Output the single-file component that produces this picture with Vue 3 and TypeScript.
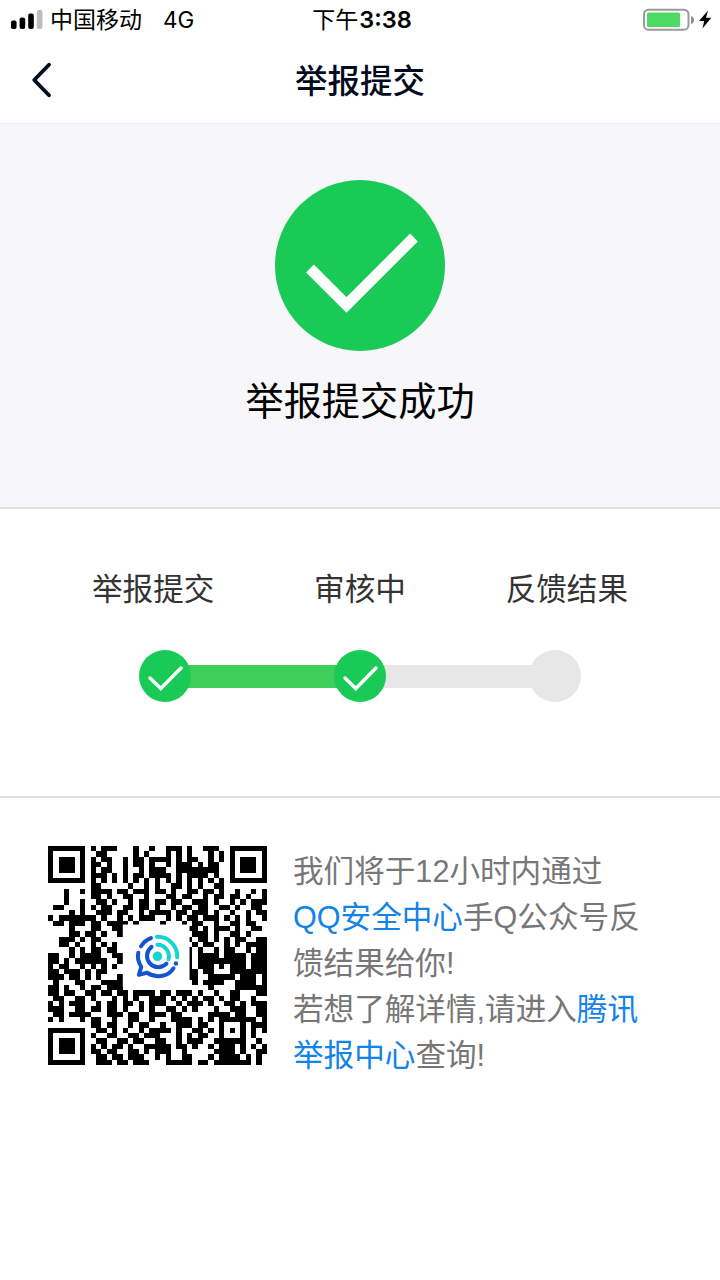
<template>
  <div class="page">
    <div class="status-bar">
      <div class="status-left">
        <svg class="signal" width="32" height="20" viewBox="0 0 32 20">
          <rect x="0" y="10.5" width="5.6" height="8.5" rx="2" fill="#000" />
          <rect x="8.6" y="7.5" width="5.6" height="11.5" rx="2" fill="#000" />
          <rect x="17.2" y="3.6" width="5.6" height="15.4" rx="2" fill="#000" />
          <rect x="25.8" y="0" width="5.6" height="19" rx="2" fill="#bdbdbd" />
        </svg>
        <span class="carrier">中国移动</span>
        <span class="network">4G</span>
      </div>
      <div class="clock">下午<b>3:38</b></div>
      <div class="status-right">
        <svg width="69" height="24" viewBox="0 0 69 24">
          <rect x="1" y="1.7" width="44.5" height="20" rx="4.5" fill="#fff" stroke="#999" stroke-width="2" />
          <rect x="4" y="4.5" width="33" height="14.5" rx="1.5" fill="#4cd964" />
          <path d="M48 8 Q51 9 51 12 Q51 15 48 16 Z" fill="#8c8c8c" />
          <path d="M65 2.5 L56 13 H61.2 L59.5 20.5 L68.3 9.8 H63 Z" fill="#000" />
        </svg>
      </div>
    </div>

    <header class="nav-bar">
      <svg class="back" width="22" height="38" viewBox="0 0 22 38">
        <path d="M19 3.7 L4.2 19 L19 34.3" fill="none" stroke="#030b21" stroke-width="3.8" stroke-linecap="round" stroke-linejoin="round" />
      </svg>
      <h1>举报提交</h1>
    </header>

    <section class="result">
      <svg width="170" height="171" viewBox="0 0 170 171">
        <ellipse cx="85" cy="85.5" rx="85" ry="85.5" fill="#19cb56" />
        <path d="M35 88.5 L71.5 125 L139 57.5" fill="none" stroke="#fff" stroke-width="11" />
      </svg>
      <p>举报提交成功</p>
    </section>

    <section class="progress">
      <div class="labels">
        <span v-for="step in steps" :key="step.label">{{ step.label }}</span>
      </div>
      <div class="track">
        <template v-for="(step, index) in steps" :key="step.label">
          <div v-if="index > 0" :class="['line', { done: step.done }]"></div>
          <div :class="['dot', { done: step.done }]">
            <svg v-if="step.done" width="52" height="52" viewBox="0 0 52 52">
              <path d="M11 28 L21.8 38.5 L42 18" fill="none" stroke="#fff" stroke-width="3.4" stroke-linecap="round" />
            </svg>
          </div>
        </template>
      </div>
    </section>

    <section class="notice">
      <svg class="qr" width="219" height="219" viewBox="0 0 41 41">
        <path :d="qrPath" fill="#000" shape-rendering="crispEdges" />
        <rect x="14" y="14.7" width="12.5" height="11.7" fill="#fff" />
        <g transform="translate(20.5 20.65) scale(0.18722)" fill="none" stroke-width="4" stroke-linecap="round">
          <path d="M-0.5 -19.5 A19.5 19.5 0 0 1 19.7 1" stroke="#16d5d0" />
          <path d="M0 -11.5 A11.5 11.5 0 0 1 11 3" stroke="#16d5d0" />
          <path d="M-16.5 -10 A19.3 19.3 0 0 1 -6.5 -18.2" stroke="#1454d2" />
          <path d="M-19.2 -3.5 C-20.5 2 -18.5 7 -16.2 10.5 L-18.7 18.6 L-10.5 16.5 C0 23 11.5 19.5 16 12" stroke="#1454d2" stroke-linejoin="round" />
          <path d="M-6 -9.5 A11.3 11.3 0 1 0 9 7.3" stroke="#1454d2" />
          <circle cx="0" cy="0" r="4.8" fill="#16d5d0" />
          <circle cx="18.4" cy="7.2" r="2.2" fill="#1454d2" />
        </g>
      </svg>
      <div class="notice-text">
        我们将于12小时内通过<br />
        <a>QQ安全中心</a>手Q公众号反<br />
        馈结果给你!<br />
        若想了解详情,请进入<a>腾讯<br />举报中心</a>查询!
      </div>
    </section>
  </div>
</template>

<script setup lang="ts">
import { computed } from 'vue'

interface Step {
  label: string
  done: boolean
}

const steps: Step[] = [
  { label: '举报提交', done: true },
  { label: '审核中', done: true },
  { label: '反馈结果', done: false }
]

// # - чёрный модуль
const qrRows: string[] = [
  '#######.#.###...#..#.' + '.###.#..###..#######',
  '#.....#..##.....#.#..' + '.#.#.#...#.#.#.....#',
  '#.###.#.#.##..#.##.##' + '##.#.##..#.#.#.###.#',
  '#.###.#.##.#..#.##.#.' + '.#.###.#.##..#.###.#',
  '#.###.#.#.##..#..#.##' + '#..########..#.###.#',
  '#.....#.###.#.#.##.##' + '##.#.####.#..#.....#',
  '#######.#.#.#.#.#.#.#' + '.#.#.#.#.#.#.#######',
  '........##.....#..#.#' + '..##.#.#..##........',
  '...#..#.####.##.###.#' + '#.#..##.##.#..#..#.#',
  '...#....##.#..##..#..' + '.##.##..#.##.##.#..#',
  '...#..#..##.#..#.##.#' + '#.##..###.#..#.#.###',
  '.##...#.#.##..##.##.#' + '..#.##.##..##.#..##.',
  '....#.#..###.##..#.##' + '##.##.###.#..#..#.##',
  '#.#######.#..#.#.###.' + '.#.#.##.###.#.#.#..#',
  '.##.###.##.####.#....' + '#...#.##..#..##.##..',
  '....#...##..##.......' + '.....##.#.###.#..##.',
  '....##.##.#..#.......' + '......###.#..##.#...',
  '..###.#.##...........' + '.....#.##.#.#.##..##',
  '..##.#..#.#.#........' + '......#.##..#.#.####',
  '....#.#.##.##........' + '.....#.#..#.##..#.##',
  '##..#.####..##.......' + '.....#.####.####.###',
  '##.#.######..#.......' + '.....#.#########.###',
  '#.##..#.#.#.#........' + '.....#.###.#.###.###',
  '##.###.#.##...#......' + '.....##.##...#######',
  '###.##.#.#...#.......' + '.....##..#####.###.#',
  '.#...##...####.......' + '......#.####..####.#',
  '##.#..#.##.###.......' + '.........#....######',
  '##.##..##.##.##.####.' + '##.###.#..#..##...##',
  '.##..##.#...#.#.#..##' + '#.#.#.#.##.#.##..#..',
  '#.#.###..#.##.##.#.##' + '#..#.###.#..##.#.###',
  '###..##.##.##.#..#.#.' + '.##.#.#...#..###..##',
  '.##.####...###.##..##' + '#.##.....####.##..##',
  '#.#...#.##..#..##..#.' + '..####.#.#.#######.#',
  '........##.##..#.##..' + '#..###.##..#...#.###',
  '#######..##.#.#..#.##' + '##.#..##.#.#.#.#.#.#',
  '#.....#.#..##..##.###' + '...#.#.##..#...#.#..',
  '#.###.#..##..##.##..#' + '#..#.###..######..#.',
  '#.###.#.#.#.##.#..###' + '##.##.#..#.###.#.#.#',
  '#.###.#.##.##..##.#.#' + '##..#.....####.#..##',
  '#.....#..##.##.###..#' + '.#..##...#.####.#.#.',
  '#######..###.##.###..' + '.#####.##.#######.#.'
]

const qrPath = computed(() => {
  return qrRows
    .map((row, y) =>
      row
        .split('')
        .map((cell, x) => (cell === '#' ? `M${x} ${y}h1v1h-1z` : ''))
        .join('')
    )
    .join('')
})
</script>

<style>
body {
  margin: 0;
  background: #fff;
}
</style>

<style scoped>
.page {
  width: 720px;
  height: 1280px;
  overflow: hidden;
  background: #fff;
  font-family: "Liberation Sans", "Noto Sans CJK SC", sans-serif;
  color: #000;
}

.status-bar {
  display: grid;
  grid-template-columns: 1fr auto 1fr;
  align-items: center;
  height: 40px;
  padding: 0 8px 0 11px;
  box-sizing: border-box;
  font-family: Inter, "Noto Sans CJK SC", sans-serif;
  font-size: 23px;
  line-height: 40px;
}

.status-left {
  display: flex;
  align-items: center;
}

.carrier {
  margin-left: 7px;
}

.network {
  margin-left: 21px;
  font-size: 22.5px;
}

.clock {
  padding-left: 1px;
}

.clock b {
  margin-left: 1px;
  font-weight: 600;
  font-size: 23.5px;
}

.status-right {
  display: flex;
  justify-content: flex-end;
}

.nav-bar {
  display: grid;
  grid-template-columns: 100px 1fr 100px;
  align-items: center;
  height: 84px;
  box-sizing: border-box;
  border-bottom: 1px solid #ebecef;
}

.back {
  margin: 0 0 3px 30px;
}

.nav-bar h1 {
  margin: 0;
  text-align: center;
  font-size: 32.5px;
  font-weight: 500;
  line-height: 48px;
  color: #030b21;
}

.result {
  display: flex;
  flex-direction: column;
  align-items: center;
  height: 385px;
  padding-top: 56px;
  box-sizing: border-box;
  background: #f7f7f9;
  border-bottom: 2px solid #dedfe0;
}

.result p {
  margin: 23px 0 0;
  font-size: 38.2px;
  line-height: 56px;
}

.progress {
  height: 289px;
  padding: 58px 92px 0;
  box-sizing: border-box;
  border-bottom: 2px solid #dedfe0;
}

.labels {
  display: flex;
  justify-content: space-between;
  font-size: 30.6px;
  line-height: 44px;
  color: #333;
}

.track {
  display: flex;
  align-items: center;
  margin: 39px 47px 0;
}

.dot {
  position: relative;
  z-index: 1;
  flex: none;
  width: 52px;
  height: 52px;
  border-radius: 50%;
  background: #e7e7e7;
}

.dot.done {
  background: #19cb56;
}

.dot svg {
  display: block;
}

.line {
  flex: 1;
  height: 23px;
  margin: 0 -4px;
  background: #e7e7e7;
}

.line.done {
  background: #3fce5a;
}

.notice {
  display: flex;
  align-items: flex-start;
  padding: 48px 48px 0;
}

.qr {
  flex: none;
}

.notice-text {
  margin: 2px 0 0 26px;
  font-size: 30.6px;
  line-height: 46px;
  white-space: nowrap;
  color: #777;
}

.notice-text a {
  color: #1283e9;
}
</style>
